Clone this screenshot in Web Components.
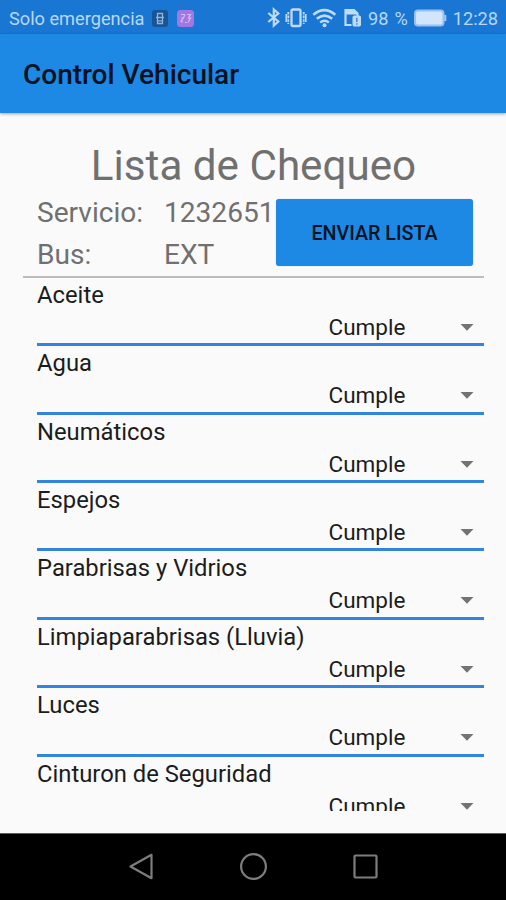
<!DOCTYPE html>
<html lang="es">
<head>
<meta charset="utf-8">
<title>Control Vehicular</title>
<style>
  body {
    margin: 0;
    background: #fafafa;
    font-family: Roboto, "Liberation Sans", sans-serif;
  }
</style>
</head>
<body>
<vehicle-app>
  <status-bar slot="status" carrier="Solo emergencia" battery="98 %" time="12:28"></status-bar>
  <app-bar slot="bar">Control Vehicular</app-bar>
  <service-header servicio="1232651" bus="EXT">Lista de Chequeo</service-header>
  <check-list>
    <check-item value="Cumple">Aceite</check-item>
    <check-item value="Cumple">Agua</check-item>
    <check-item value="Cumple">Neumáticos</check-item>
    <check-item value="Cumple">Espejos</check-item>
    <check-item value="Cumple">Parabrisas y Vidrios</check-item>
    <check-item value="Cumple">Limpiaparabrisas (Lluvia)</check-item>
    <check-item value="Cumple">Luces</check-item>
    <check-item value="Cumple">Cinturon de Seguridad</check-item>
  </check-list>
  <nav-bar slot="nav"></nav-bar>
</vehicle-app>

<script>
class VehicleApp extends HTMLElement {
  constructor() {
    super();
    this.attachShadow({mode: 'open'});
  }

  connectedCallback() {
    this.shadowRoot.innerHTML = `
      <style>
        :host {
          display: flex;
          flex-direction: column;
          width: 506px;
          height: 900px;
          overflow: hidden;
          background: #fafafa;
        }
        main {
          flex: 1;
          min-height: 0;
          display: flex;
          flex-direction: column;
          box-sizing: border-box;
          padding: 28px 22px 22.5px 23px;
        }
      </style>
      <slot name="status"></slot>
      <slot name="bar"></slot>
      <main><slot></slot></main>
      <slot name="nav"></slot>
    `;
  }
}

class StatusBar extends HTMLElement {
  constructor() {
    super();
    this.attachShadow({mode: 'open'});
  }

  connectedCallback() {
    this.shadowRoot.innerHTML = `
      <style>
        :host {
          display: flex;
          align-items: center;
          height: 34px;
          flex: none;
          box-sizing: border-box;
          padding: 2px 8px 0 9px;
          background: #1976d2;
          color: #b9d7f6;
          font-size: 18.2px;
        }
        svg {
          display: block;
          flex: none;
        }
        .app { margin-left: 8px; }
        .app + .app { margin-left: 9px; }
        .right {
          display: flex;
          align-items: center;
          margin-left: auto;
        }
        .battery { word-spacing: 1.5px; }
        .time { margin-left: 6px; }
      </style>
      <span class="carrier">${this.getAttribute('carrier')}</span>
      <svg class="app" width="16" height="17" viewBox="0 0 16 17">
        <rect width="16" height="17" rx="3" fill="#195493"/>
        <path d="M5.500 7V3.500h5V7M4 7.500h8M5.500 8v5.500h5V8M5.500 10.800h5" fill="none" stroke="#8fb4d8" stroke-width="1.300"/>
      </svg>
      <svg class="app" width="17" height="17" viewBox="0 0 17 17">
        <rect width="17" height="17" rx="3.500" fill="#a277e4"/>
        <path d="M4 4.500h4M10 4.500h3.500l-2 3.500h2l-2.500 4.500M4 12l4-7M4 8h3M8 12.500h2M3.500 10.500l2 2" fill="none" stroke="#d3bdf5" stroke-width="1.200"/>
      </svg>
      <div class="right">
        <svg width="102" height="24" viewBox="267 6 102 24">
          <g fill="none" stroke="#bfdbf8">
            <path d="M269.300 13l10 8.500-4.500 4V9.500l4.500 4-10 8.500" stroke-width="2.200"/>
            <rect x="292.500" y="9.500" width="9" height="16.500" rx="1.500" stroke-width="2.300"/>
            <path d="M289.300 12v12M304.700 12v12" stroke-width="1.800" stroke-dasharray="2.600 1"/>
            <path d="M287.300 14v8M306.800 14v8" stroke-width="1.600"/>
            <path d="M314.300 14.800q11-9.400 22 0M317.800 18.800q7.700-6.400 15.400 0M321.200 22.500q4.300-3.400 8.600 0" stroke-width="2.500"/>
            <circle cx="325.500" cy="25.200" r="2" fill="#bfdbf8" stroke="none"/>
            <path d="M352.500 25h-6V10h8.500l3.500 3.500v3" stroke-width="2.200"/>
            <path d="M347 10h8l3 3v1h-11z" fill="#bfdbf8"/>
            <rect x="354" y="16" width="7.500" height="10" rx="1" fill="#bfdbf8"/>
            <path d="M357.800 17.800v4.200M357.800 23.200v1.500" stroke="#3d89d9" stroke-width="1.500"/>
          </g>
        </svg>
        <span class="battery">${this.getAttribute('battery')}</span>
        <svg width="33" height="18" viewBox="0 0 33 18" style="margin-left:6px">
          <rect x="1" y="1.500" width="28.500" height="15" rx="3" fill="#d3e5fb" stroke="#99c1f1" stroke-width="2"/>
          <path d="M31.300 6v6" stroke="#a8cbf4" stroke-width="2"/>
        </svg>
        <span class="time">${this.getAttribute('time')}</span>
      </div>
    `;
  }
}

class AppBar extends HTMLElement {
  constructor() {
    super();
    this.attachShadow({mode: 'open'});
  }

  connectedCallback() {
    this.shadowRoot.innerHTML = `
      <style>
        :host {
          display: flex;
          align-items: center;
          height: 79px;
          flex: none;
          box-sizing: border-box;
          padding: 2px 23px 0;
          background: #1e88e5;
          box-shadow: 0 1px 3px rgba(0, 0, 0, 0.35);
          color: #06121f;
          font-size: 28px;
          font-weight: 500;
        }
      </style>
      <slot></slot>
    `;
  }
}

class ServiceHeader extends HTMLElement {
  constructor() {
    super();
    this.attachShadow({mode: 'open'});
  }

  connectedCallback() {
    this.shadowRoot.innerHTML = `
      <style>
        :host {
          display: block;
          flex: none;
          height: 137px;
          box-sizing: border-box;
          border-bottom: 2px solid #bdbdbd;
          color: #707070;
        }
        h1 {
          margin: 0;
          font-size: 42.2px;
          font-weight: 400;
          line-height: 50px;
          text-align: center;
        }
        .info {
          display: grid;
          grid-template-columns: 127px 112px 197px;
          grid-template-rows: 42px 42px;
          margin: 5px 0 0 14px;
          font-size: 28.1px;
          line-height: 34px;
          white-space: nowrap;
        }
        send-button {
          grid-column: 3;
          grid-row: 1 / 3;
          margin-top: 3px;
        }
      </style>
      <h1><slot></slot></h1>
      <div class="info">
        <span>Servicio:</span><span>${this.getAttribute('servicio')}</span>
        <send-button>ENVIAR LISTA</send-button>
        <span>Bus:</span><span>${this.getAttribute('bus')}</span>
      </div>
    `;
  }
}

class SendButton extends HTMLElement {
  constructor() {
    super();
    this.attachShadow({mode: 'open'});
  }

  connectedCallback() {
    this.shadowRoot.innerHTML = `
      <style>
        :host { display: block; }
        button {
          display: block;
          width: 197px;
          height: 67px;
          padding: 2px 0 0;
          border: 0;
          border-radius: 3px;
          background: #1e88e5;
          box-shadow: 0 0 1px rgba(30, 136, 229, 0.6);
          color: #06121f;
          font: 500 19.7px Roboto, "Liberation Sans", sans-serif;
        }
      </style>
      <button><slot></slot></button>
    `;
  }
}

class CheckList extends HTMLElement {
  constructor() {
    super();
    this.attachShadow({mode: 'open'});
  }

  connectedCallback() {
    this.shadowRoot.innerHTML = `
      <style>
        :host {
          display: block;
          flex: 1;
          min-height: 0;
          overflow: hidden;
          margin-top: -0.3px;
          padding-left: 14px;
        }
      </style>
      <slot></slot>
    `;
  }
}

class CheckItem extends HTMLElement {
  constructor() {
    super();
    this.attachShadow({mode: 'open'});
  }

  connectedCallback() {
    this.shadowRoot.innerHTML = `
      <style>
        :host {
          display: block;
          height: 68.45px;
          box-sizing: border-box;
          padding-top: 4px;
          border-bottom: 3px solid #3285de;
          color: #1c1c1c;
          font-size: 22.5px;
          line-height: 27px;
        }
        .label { font-size: 23.8px; }
        .select {
          display: flex;
          align-items: center;
          justify-content: space-between;
          margin: 5px 10px 0 291.5px;
        }
        svg { display: block; }
      </style>
      <div class="label"><slot></slot></div>
      <div class="select">
        <span>${this.getAttribute('value')}</span>
        <svg width="14" height="7" viewBox="0 0 14 7"><path d="M0.500 0h13l-6.500 6.800z" fill="#737373"/></svg>
      </div>
    `;
  }
}

class NavBar extends HTMLElement {
  constructor() {
    super();
    this.attachShadow({mode: 'open'});
  }

  connectedCallback() {
    this.shadowRoot.innerHTML = `
      <style>
        :host {
          display: flex;
          align-items: center;
          justify-content: center;
          gap: 84px;
          height: 67px;
          flex: none;
          box-sizing: border-box;
          border-top: 1px solid #5c5c5c;
          background: #000;
        }
        svg {
          fill: none;
          stroke: #7d7d7d;
          stroke-width: 2.2;
          stroke-linejoin: round;
        }
      </style>
      <svg width="28" height="28" viewBox="0 0 28 28"><path d="M3.500 13.500L24.500 1.800v23.400z"/></svg>
      <svg width="28" height="28" viewBox="0 0 28 28"><circle cx="14.500" cy="13.500" r="12.400"/></svg>
      <svg width="28" height="28" viewBox="0 0 28 28"><rect x="3.500" y="2.500" width="22" height="22" rx="1"/></svg>
    `;
  }
}

customElements.define('vehicle-app', VehicleApp);
customElements.define('status-bar', StatusBar);
customElements.define('app-bar', AppBar);
customElements.define('service-header', ServiceHeader);
customElements.define('send-button', SendButton);
customElements.define('check-list', CheckList);
customElements.define('check-item', CheckItem);
customElements.define('nav-bar', NavBar);
</script>
</body>
</html>
